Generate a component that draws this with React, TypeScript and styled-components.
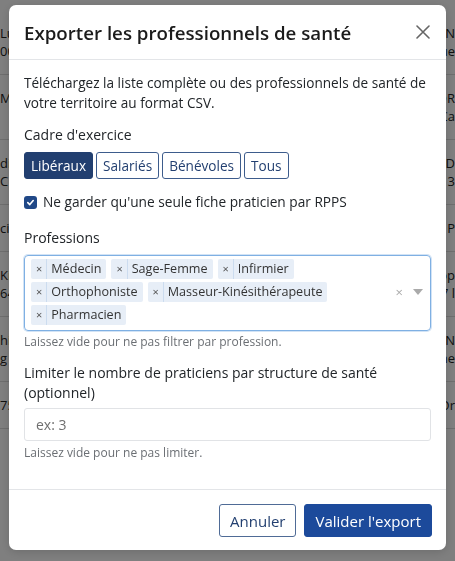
import React from "react";
import styled, { createGlobalStyle } from "styled-components";

const GlobalStyle = createGlobalStyle`
  html, body {
    margin: 0;
    padding: 0;
    background: #ffffff;
    font-family: "Open Sans", "Noto Sans", sans-serif;
    color: #212529;
  }
  * { box-sizing: border-box; }
`;

const backgroundRows = [
  ["Lu", "IN", "ue", "00"],
  ["Ma", "OR", "Ca", ""],
  ["di", "D", "3", "C"],
  ["ci", "P", "", ""],
  ["Ki", "op", "7 l", "64"],
  ["hi", "IN", "ne", "g"],
  ["75", "Or", "", ""],
];

const Page = styled.div`
  min-height: 561px;
  padding: 10px 0;
`;

const BgRow = styled.div`
  display: flex;
  justify-content: space-between;
  border-bottom: 1px solid #dcdcdc;
  padding: 14px 0;
  font-size: 13px;
  line-height: 18px;
  color: #222;
`;

const BgCell = styled.div<{ $align?: string }>`
  display: flex;
  flex-direction: column;
  text-align: ${(p) => p.$align || "left"};
`;

const Backdrop = styled.div`
  position: fixed;
  inset: 0;
  background: rgba(0, 0, 0, 0.5);
  padding: 5px 9px;
  display: flex;
  justify-content: center;
  align-items: flex-start;
`;

const Modal = styled.div`
  width: 437px;
  background: #fff;
  border-radius: 7px;
  display: flex;
  flex-direction: column;
  box-shadow: 0 2px 10px rgba(0, 0, 0, 0.15);
`;

const Header = styled.div`
  display: flex;
  align-items: center;
  justify-content: space-between;
  padding: 0 14px 0 15px;
  height: 55px;
  border-bottom: 1px solid #e3e5e8;
`;

const Title = styled.h5`
  margin: 0;
  font-size: 18.7px;
  font-weight: 600;
  color: #1b1b1b;
`;

const CloseButton = styled.button`
  border: none;
  background: none;
  padding: 0;
  width: 18px;
  height: 18px;
  display: flex;
  align-items: center;
  justify-content: center;
  cursor: pointer;
`;

const Body = styled.div`
  padding: 13px 15px 28px;
  font-size: 14px;
  line-height: 20px;
`;

const Intro = styled.p`
  margin: 0 0 12px;
  font-size: 13.6px;
`;

const Label = styled.div`
  margin-bottom: 7px;
`;

const ButtonGroup = styled.div`
  display: flex;
  gap: 3px;
  margin-bottom: 13px;
`;

const Toggle = styled.button<{ $active?: boolean }>`
  height: 27px;
  padding: 0 6px;
  font-family: inherit;
  font-size: 13.6px;
  font-weight: 500;
  border-radius: 3px;
  border: 1px solid ${(p) => (p.$active ? "#223f70" : "#3d5c8c")};
  background: ${(p) => (p.$active ? "#223f70" : "#fff")};
  color: ${(p) => (p.$active ? "#fff" : "#223f70")};
`;

const CheckRow = styled.label`
  display: flex;
  align-items: center;
  gap: 6px;
  margin-bottom: 16px;
  font-size: 13.7px;
`;

const Box = styled.span`
  width: 13px;
  height: 13px;
  border-radius: 3px;
  background: #204887;
  display: flex;
  align-items: center;
  justify-content: center;
`;

const SelectBox = styled.div`
  display: flex;
  align-items: center;
  min-height: 76px;
  border: 1px solid #7fb0e3;
  border-radius: 4px;
  box-shadow: 0 0 0 1px rgba(127, 176, 227, 0.35);
  padding: 0 6px 2px 6px;
  margin-bottom: 3px;
`;

const Tags = styled.div`
  flex: 1;
  display: flex;
  flex-wrap: wrap;
  gap: 3px 5px;
`;

const Tag = styled.div`
  display: flex;
  align-items: center;
  height: 20px;
  background: #e7eef7;
  border-radius: 2px;
  font-size: 12.6px;
  color: #333;
`;

const TagRemove = styled.span`
  padding: 0 4px 0 5px;
  font-size: 11px;
  color: #555;
  border-right: 1px solid #ccdcef;
  height: 100%;
  display: flex;
  align-items: center;
`;

const TagLabel = styled.span`
  padding: 0 5px 0 4px;
`;

const Indicators = styled.div`
  display: flex;
  align-items: center;
  gap: 10px;
  padding-right: 1px;
  color: #aaa;
  font-size: 13px;
`;

const Help = styled.div`
  font-size: 12px;
  line-height: 16px;
  color: #6b6f74;
`;

const Group = styled.div`
  margin-top: 13px;
`;

const Input = styled.input`
  display: block;
  width: 100%;
  height: 33px;
  margin: 5px 0 4px;
  border: 1px solid #e1e3e6;
  border-radius: 3px;
  padding: 0 11px;
  font-family: inherit;
  font-size: 14px;
  color: #222;
  &::placeholder {
    color: #6f6f6f;
  }
`;

const Footer = styled.div`
  display: flex;
  justify-content: flex-end;
  gap: 8px;
  padding: 14px 14px 13px;
  border-top: 1px solid #e3e5e8;
`;

const FooterButton = styled.button<{ $primary?: boolean }>`
  height: 33px;
  padding: 0 10px;
  font-family: inherit;
  font-size: 15px;
  font-weight: 500;
  border-radius: 3px;
  border: 1px solid ${(p) => (p.$primary ? "#1c4a9b" : "#4f6b96")};
  background: ${(p) => (p.$primary ? "#1c4a9b" : "#fff")};
  color: ${(p) => (p.$primary ? "#fff" : "#223f70")};
`;

const professions = [
  "Médecin",
  "Sage-Femme",
  "Infirmier",
  "Orthophoniste",
  "Masseur-Kinésithérapeute",
  "Pharmacien",
];

export default function App() {
  return (
    <>
      <GlobalStyle />
      <Page>
        {backgroundRows.map((row, i) => (
          <BgRow key={i}>
            <BgCell>
              <span>{row[0]}</span>
              <span>{row[3]}</span>
            </BgCell>
            <BgCell $align="right">
              <span>{row[1]}</span>
              <span>{row[2]}</span>
            </BgCell>
          </BgRow>
        ))}
      </Page>
      <Backdrop>
        <Modal>
          <Header>
            <Title>Exporter les professionnels de santé</Title>
            <CloseButton aria-label="Fermer">
              <svg width="14" height="14" viewBox="0 0 14 14">
                <path d="M1 1L13 13M13 1L1 13" stroke="#666" strokeWidth="1.6" strokeLinecap="round" />
              </svg>
            </CloseButton>
          </Header>
          <Body>
            <Intro>
              Téléchargez la liste complète ou des professionnels de santé de votre territoire au format CSV.
            </Intro>
            <Label>Cadre d'exercice</Label>
            <ButtonGroup>
              <Toggle $active>Libéraux</Toggle>
              <Toggle>Salariés</Toggle>
              <Toggle>Bénévoles</Toggle>
              <Toggle>Tous</Toggle>
            </ButtonGroup>
            <CheckRow>
              <Box>
                <svg width="9" height="9" viewBox="0 0 10 10">
                  <path d="M2 5.2L4.2 7.3L8 2.8" stroke="#fff" strokeWidth="1.8" fill="none" strokeLinecap="round" strokeLinejoin="round" />
                </svg>
              </Box>
              Ne garder qu'une seule fiche praticien par RPPS
            </CheckRow>
            <Label>Professions</Label>
            <SelectBox>
              <Tags>
                {professions.map((p) => (
                  <Tag key={p}>
                    <TagRemove>×</TagRemove>
                    <TagLabel>{p}</TagLabel>
                  </Tag>
                ))}
              </Tags>
              <Indicators>
                <span>×</span>
                <svg width="10" height="6" viewBox="0 0 10 6">
                  <path d="M0 0H10L5 6Z" fill="#aaa" />
                </svg>
              </Indicators>
            </SelectBox>
            <Help>Laissez vide pour ne pas filtrer par profession.</Help>
            <Group>
              <div>Limiter le nombre de praticiens par structure de santé (optionnel)</div>
              <Input placeholder="ex: 3" />
              <Help>Laissez vide pour ne pas limiter.</Help>
            </Group>
          </Body>
          <Footer>
            <FooterButton>Annuler</FooterButton>
            <FooterButton $primary>Valider l'export</FooterButton>
          </Footer>
        </Modal>
      </Backdrop>
    </>
  );
}
